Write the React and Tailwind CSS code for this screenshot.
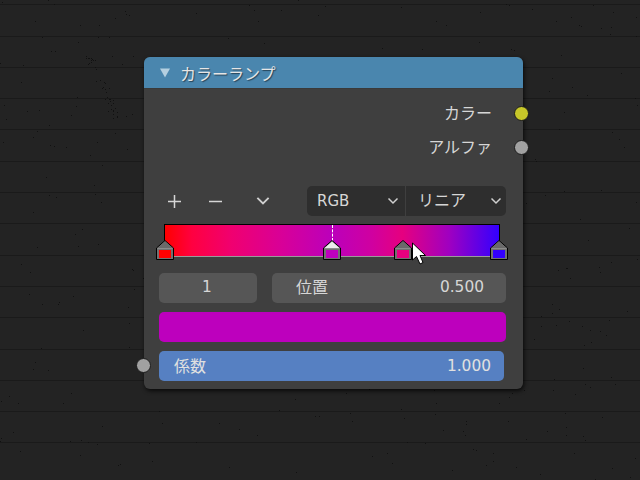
import React from 'react';

const FONT = '"DejaVu Sans", "Noto Sans CJK JP", sans-serif';

// deterministic specks for the worn background
const specks = [];
let seed = 7;
const rnd = () => {
  seed = (seed * 16807) % 2147483647;
  return seed / 2147483647;
};
for (let i = 0; i < 420; i++) {
  specks.push([Math.floor(rnd() * 640), Math.floor(rnd() * 480)]);
}
for (let i = 0; i < 40; i++) {
  const t = rnd();
  specks.push([Math.floor(86 + t * 26 + rnd() * 10), Math.floor(58 + t * 62)]);
}

const Chevron = ({ className }) => (
  <svg width="12" height="8" viewBox="0 0 12 8" className={className}>
    <path d="M1.5 1.5 L6 6 L10.5 1.5" fill="none" stroke="#d0d0d0" strokeWidth="1.5" />
  </svg>
);

const Stop = ({ left, color, active }) => (
  <svg
    width="18"
    height="21"
    viewBox="0 0 18 21"
    className="absolute top-[15px]"
    style={{ left: left - 9 }}
  >
    <path d="M0.5 19.5 V8 L9 0.5 L17.5 8 V19.5 Z" fill="#717171" stroke="#000" strokeWidth="1" />
    <path d="M1.5 8 L9 1.5 L16.5 8 Z" fill={active ? '#ececec' : '#6a6a6a'} />
    <rect x="1.5" y="8" width="15" height="1" fill="#8c8c8c" />
    <rect x="3" y="10" width="12" height="8" fill={color} />
  </svg>
);

const Socket = ({ color, className }) => (
  <span className={`absolute w-[15px] h-[15px] rounded-full border border-[#1c1c1c] ${color} ${className}`} />
);

export default function App() {
  return (
    <div
      className="relative w-[640px] h-[480px] overflow-hidden pl-[144px] pt-[57px] bg-[repeating-linear-gradient(to_bottom,#232323_0px,#232323_30.3px,#1a1a1a_30.3px,#1a1a1a_31.3px)] bg-[position:0_-26px]"
      style={{ fontFamily: FONT }}
    >
      <svg width="640" height="480" className="absolute left-0 top-0">
        {specks.map(([x, y], i) => (
          <rect key={i} x={x} y={y} width="1" height="1" fill="#111111" />
        ))}
      </svg>

      <div className="relative w-[379px] h-[332px] rounded-[6px] bg-[#3f3f3f] flex flex-col shadow-[1px_2px_4px_rgba(0,0,0,0.75)]">
        {/* header */}
        <div className="h-[32px] shrink-0 rounded-t-[6px] bg-[#4a86ae] flex items-center pl-[15px] border-b border-[#3a3a3a]">
          <svg width="12" height="10" viewBox="0 0 12 10">
            <path d="M1 0.5 H11 L6 9.5 Z" fill="#b4cfe0" />
          </svg>
          <span className="ml-[9px] mt-[5px] text-[16px] leading-none text-[#e6e6e6] [text-shadow:1px_1px_1px_rgba(0,0,0,0.5)]">カラーランプ</span>
        </div>

        {/* outputs */}
        <div className="flex flex-col items-end pr-[31px] pt-[8px] text-[16px] text-[#d6d6d6]">
          <div className="h-[34px] flex items-center">カラー</div>
          <div className="h-[34px] flex items-center">アルファ</div>
        </div>
        <Socket color="bg-[#c7c729]" className="left-[370px] top-[49px]" />
        <Socket color="bg-[#a1a1a1]" className="left-[370px] top-[83px]" />

        {/* toolbar */}
        <div className="mt-[21px] h-[30px] flex items-center text-[#d6d6d6]">
          <span className="w-[18px] ml-[21px] flex justify-center">
            <svg width="15" height="15" viewBox="0 0 15 15">
              <path d="M7.5 1 V14 M1 7.5 H14" stroke="#d6d6d6" strokeWidth="1.5" />
            </svg>
          </span>
          <span className="w-[15px] ml-[25px] flex justify-center">
            <svg width="15" height="15" viewBox="0 0 15 15">
              <path d="M1 7.5 H14" stroke="#d6d6d6" strokeWidth="1.5" />
            </svg>
          </span>
          <Chevron className="ml-[32px] w-[16px] h-[10px]" />
          <div className="ml-[36px] w-[99px] h-[30px] rounded-l-[5px] bg-[#2e2e2e] border-r border-[#3f3f3f] flex items-center justify-between pl-[10px] pr-[6px] text-[15px]">
            <span className="mt-[1px]">RGB</span>
            <Chevron />
          </div>
          <div className="w-[100px] h-[30px] rounded-r-[5px] bg-[#2e2e2e] flex items-center justify-between pl-[12px] pr-[4px] text-[16px]">
            <span>リニア</span>
            <Chevron />
          </div>
        </div>

        {/* ramp */}
        <div className="relative mt-[8px] ml-[20px] w-[336px] h-[33px] border border-black border-b-[#9a9a9a] bg-[linear-gradient(to_right,#ff0000_0%,#ff0040_8%,#f00070_20%,#d80098_35%,#bb00bb_50%,#d000a0_62%,#e6007f_71%,#a000c0_85%,#3300ff_100%)]">
          <span className="absolute left-[167px] top-0 h-[16px] border-l border-dashed border-white" />
          <Stop left={0} color="#ff0000" />
          <Stop left={167} color="#bd00bd" active />
          <Stop left={238} color="#e6007f" />
          <Stop left={334} color="#3300ff" />
        </div>

        {/* index and position */}
        <div className="mt-[16px] ml-[15px] flex h-[30px] gap-[15px] text-[15.4px] text-[#d6d6d6]">
          <div className="w-[98px] pr-[2px] rounded-[5px] bg-[#565656] flex items-center justify-center">1</div>
          <div className="w-[234px] rounded-[5px] bg-[#565656] flex items-center justify-between pl-[24px] pr-[22px]">
            <span className="text-[16px]">位置</span>
            <span>0.500</span>
          </div>
        </div>

        {/* colour swatch */}
        <div className="mt-[9px] ml-[15px] w-[347px] h-[30px] rounded-[5px] bg-[#bd00bd]" />

        {/* factor */}
        <div className="mt-[9px] ml-[15px] w-[345px] h-[30px] rounded-[5px] bg-[#5680c2] flex items-center justify-between pl-[15px] pr-[13px] text-[15.4px] text-[#e0e0e0]">
          <span className="text-[16px] mt-[1px]">係数</span>
          <span className="mt-[1px]">1.000</span>
        </div>
        <Socket color="bg-[#a1a1a1]" className="left-[-8px] top-[301px]" />
      </div>

      {/* mouse pointer */}
      <svg width="18" height="24" viewBox="0 0 18 24" className="absolute left-[411px] top-[242px]">
        <path d="M1.5 1 V18 L5.5 14.5 L9 22 L12 20.5 L9 13.5 L14.5 13.5 Z" fill="#fff" stroke="#000" strokeWidth="1" />
      </svg>
    </div>
  );
}
